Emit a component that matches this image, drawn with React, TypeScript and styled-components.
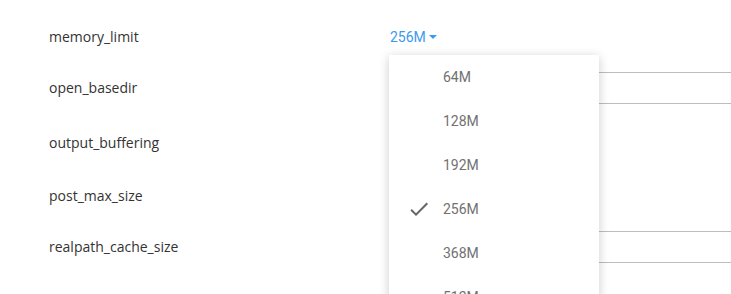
import styled, { createGlobalStyle } from "styled-components";

const GlobalStyle = createGlobalStyle`
  body {
    margin: 0;
    background: #fff;
    font-family: "Open Sans", "Liberation Sans", sans-serif;
  }
`;

const sizes = ["64M", "128M", "192M", "256M", "368M", "512M"];
const selected = "256M";

const rows = [
  { name: "memory_limit", height: 50, kind: "select" },
  { name: "open_basedir", height: 51, kind: "input" },
  { name: "output_buffering", height: 60, kind: "none" },
  { name: "post_max_size", height: 46, kind: "none" },
  { name: "realpath_cache_size", height: 55, kind: "input" },
];

const App = () => {
  return (
    <>
      <GlobalStyle />
      <Page>
        {rows.map((row) => (
          <Row key={row.name} $height={row.height}>
            <Label>{row.name}</Label>
            {row.kind === "select" && (
              <Dropdown>
                <Value>
                  {selected}
                  <Caret />
                </Value>
                <Menu>
                  {sizes.map((s) => (
                    <MenuItem key={s}>
                      <CheckSlot>
                        {s === selected && (
                          <svg width="24" height="24" viewBox="0 0 24 24">
                            <path
                              d="M9 16.17 4.83 12l-1.42 1.41L9 19 21 7l-1.41-1.41z"
                              fill="#666"
                            />
                          </svg>
                        )}
                      </CheckSlot>
                      {s}
                    </MenuItem>
                  ))}
                </Menu>
              </Dropdown>
            )}
            {row.kind === "input" && <Field />}
          </Row>
        ))}
      </Page>
    </>
  );
};

export default App;

const Page = styled.div`
  height: 294px;
  overflow: hidden;
  padding-top: 12px;
  box-sizing: border-box;
`;

const Row = styled.div<{ $height: number }>`
  display: grid;
  grid-template-columns: 341px 1fr;
  align-items: center;
  height: ${(p) => p.$height}px;
  padding-left: 49px;
`;

const Label = styled.div`
  font-size: 14px;
  color: #333;
  line-height: 20px;
`;

const Dropdown = styled.div`
  position: relative;
  height: 20px;
  margin-bottom: 5px;
`;

const Value = styled.span`
  display: inline-flex;
  align-items: center;
  font-family: Roboto, "Liberation Sans", sans-serif;
  font-size: 14px;
  line-height: 20px;
  color: #3d99f0;
  cursor: pointer;
`;

const Caret = styled.span`
  width: 0;
  height: 0;
  margin-left: 3px;
  margin-top: 1px;
  border-left: 4px solid transparent;
  border-right: 4px solid transparent;
  border-top: 4px solid #3d99f0;
`;

const Menu = styled.ul`
  position: absolute;
  left: -1px;
  top: 30px;
  z-index: 2;
  width: 210px;
  margin: 0;
  padding: 0;
  list-style: none;
  background: #fff;
  box-shadow: 0 2px 10px rgba(0, 0, 0, 0.2);
`;

const MenuItem = styled.li`
  display: flex;
  align-items: center;
  height: 44px;
  font-family: Roboto, "Liberation Sans", sans-serif;
  font-size: 14px;
  color: #717171;
`;

const CheckSlot = styled.span`
  display: flex;
  align-items: center;
  justify-content: center;
  width: 24px;
  height: 24px;
  margin-left: 18px;
  margin-right: 12px;
`;

const Field = styled.div`
  height: 30px;
  border-top: 1px solid #bdbdbd;
  border-bottom: 1px solid #bdbdbd;
`;
